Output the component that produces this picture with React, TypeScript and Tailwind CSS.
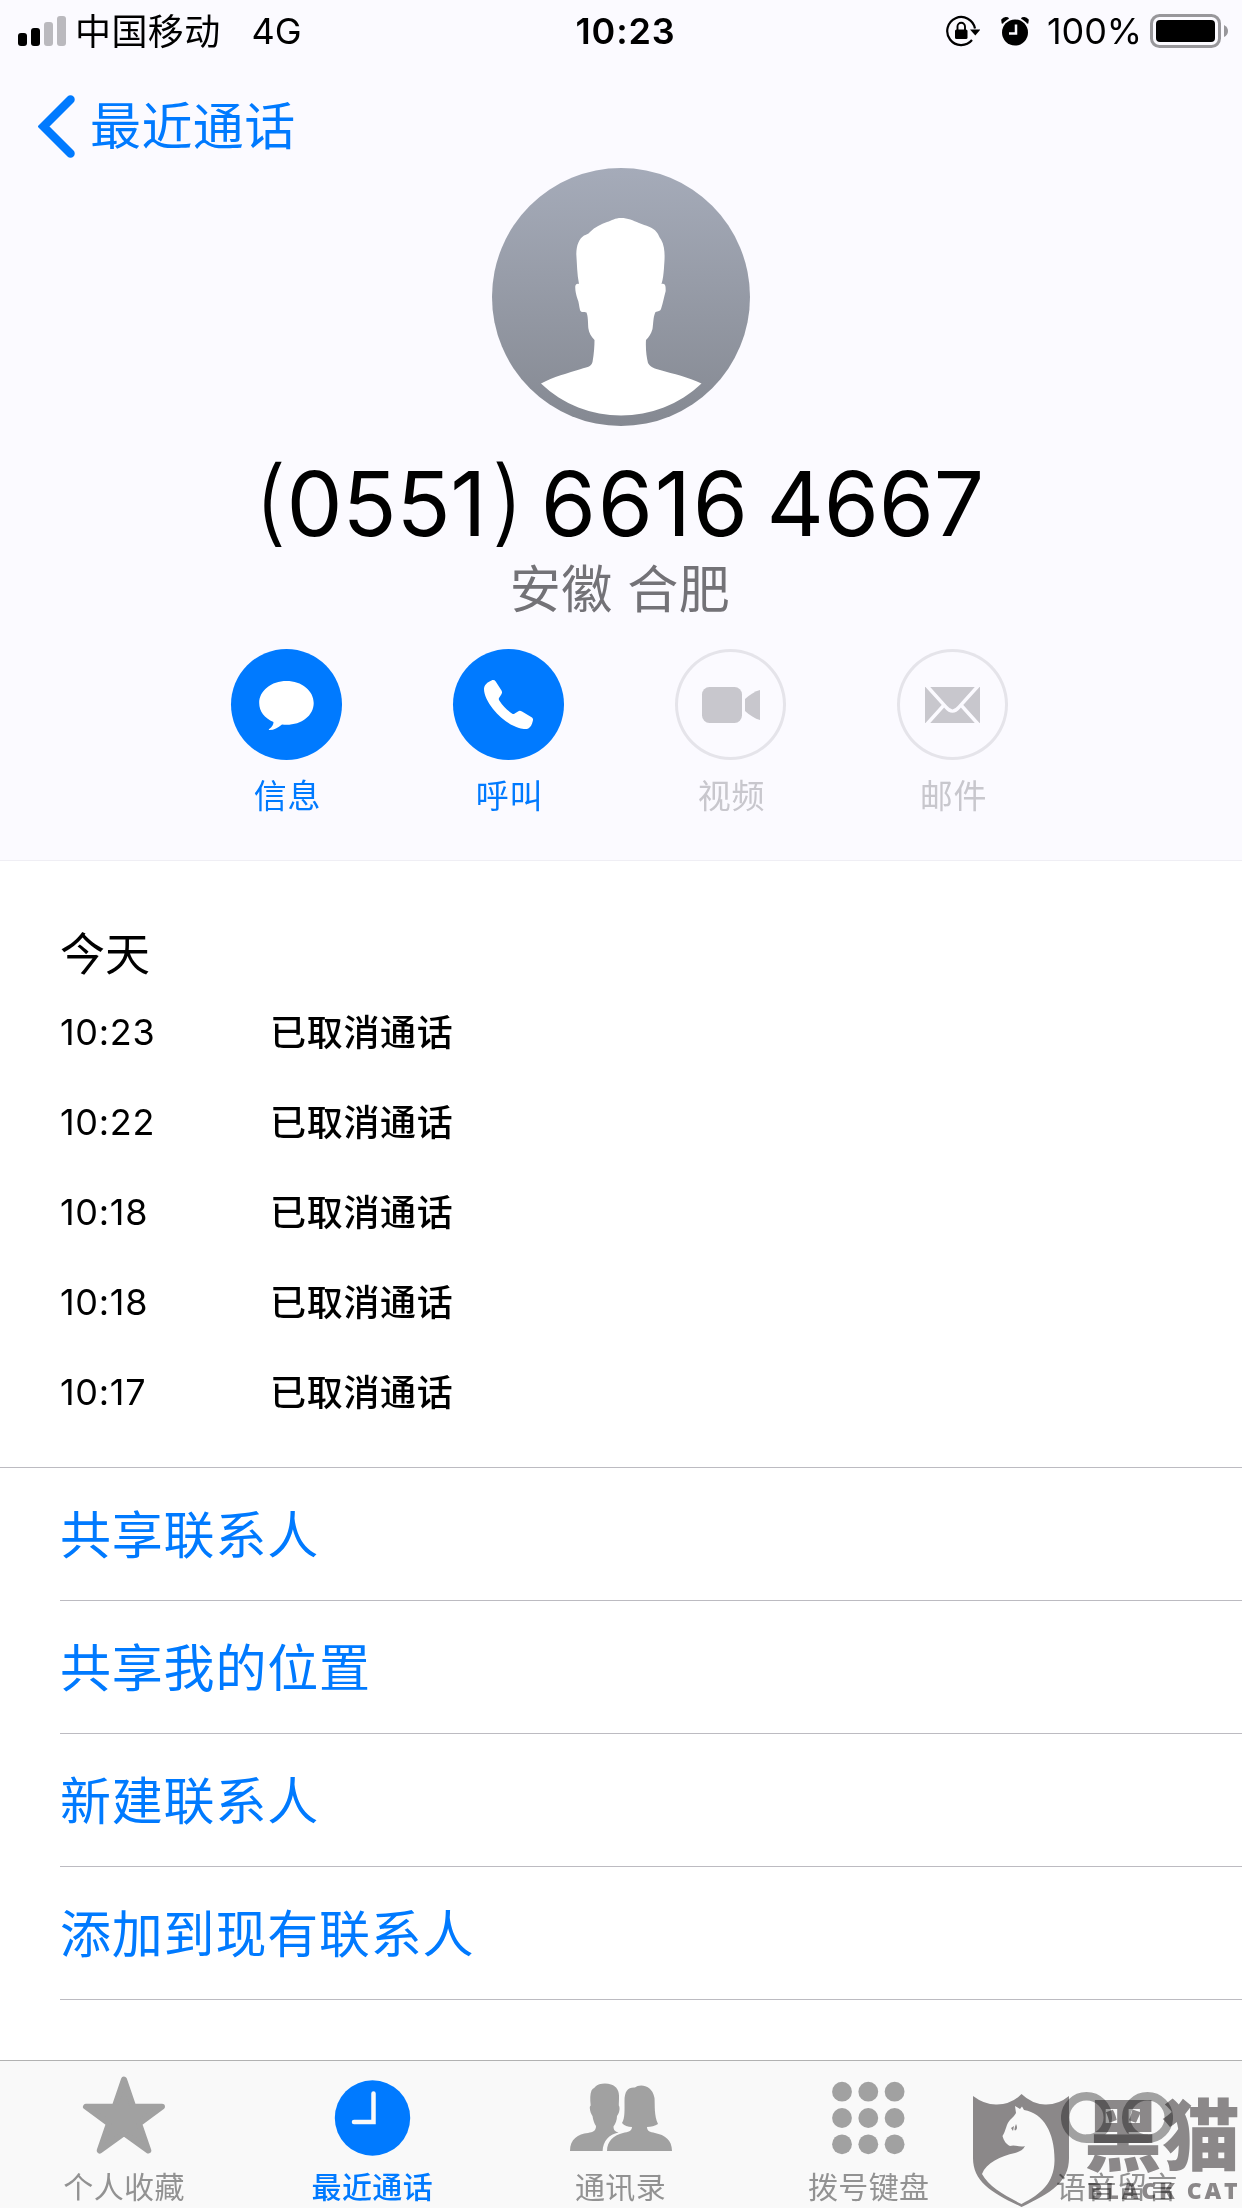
import type { ReactNode } from 'react';

interface Call {
  id: number;
  time: string;
  status: string;
}

interface Action {
  label: string;
  icon: ReactNode;
  enabled: boolean;
}

interface Tab {
  label: string;
  icon: ReactNode;
  active?: boolean;
}

const calls: Call[] = [
  { id: 1, time: '10:23', status: '已取消通话' },
  { id: 2, time: '10:22', status: '已取消通话' },
  { id: 3, time: '10:18', status: '已取消通话' },
  { id: 4, time: '10:18', status: '已取消通话' },
  { id: 5, time: '10:17', status: '已取消通话' },
];

const links = ['共享联系人', '共享我的位置', '新建联系人', '添加到现有联系人'];

const actions: Action[] = [
  {
    label: '信息',
    enabled: true,
    icon: (
      <svg viewBox="0 0 111 111" className="size-[111px]" fill="#fff">
        <path d="M55.500 32C70.700 32 82.700 41.700 82.700 54C82.700 66.500 70.700 75.800 55.500 75.800C54 75.800 52.500 75.700 51 75.500C47 79 43 81 38.500 81C37.700 81 37.600 80.300 38.200 79.900C41 78 42.500 76 42.500 73C33.500 69.200 28.200 62.500 28.200 54C28.200 41.700 40.300 32 55.500 32Z" />
      </svg>
    ),
  },
  {
    label: '呼叫',
    enabled: true,
    icon: (
      <svg viewBox="0 0 111 111" className="size-[111px]" fill="#fff">
        <path d="M38.500 31.400C40.200 30.600 41.600 30.900 42.700 32.400L48.500 41.500C49.300 42.900 49.200 44.100 48.300 45.400L46 49C45.600 50 45.800 50.600 46.300 51.400C50 57 54.500 61.500 59.300 64.800C60.100 65.300 60.900 65.200 61.700 64.600L65 62.400C66.300 61.600 67.600 61.700 69 62.500L78.600 68.300C80 69.300 80.300 70.400 79.800 72C79 75.600 77.500 78.300 75.300 79.600C73 80.500 70 80.200 66 79C57 76 47.500 69.500 40 60C34.500 53 31 45.500 31 40C31 36 34.500 33 38.500 31.400Z" />
      </svg>
    ),
  },
  {
    label: '视频',
    enabled: false,
    icon: (
      <svg viewBox="0 0 111 111" className="size-[111px]" fill="#c8c7cd">
        <rect x="27" y="38" width="40" height="36" rx="7.500" />
        <path d="M70 50C74.500 46 80 42.200 85 41V71C80 69.800 74.500 66 70 62Z" />
      </svg>
    ),
  },
  {
    label: '邮件',
    enabled: false,
    icon: (
      <svg viewBox="0 0 111 111" className="size-[111px]">
        <rect x="28" y="38" width="55" height="36" fill="#c8c7cd" />
        <g fill="none" stroke="#fbfaff" strokeWidth="3.400">
          <path d="M29.500 36.500L49 58.200Q55.500 66 62 58.200L81.500 36.500" />
          <path d="M29.500 75.500L47.500 55.500M81.500 75.500L63.500 55.500" />
        </g>
      </svg>
    ),
  },
];

const dots = [12, 38.3, 64.600];

const tabs: Tab[] = [
  {
    label: '个人收藏',
    icon: (
      <svg viewBox="0 0 90 90" className="size-[90px]" fill="#a1a1a1" stroke="#a1a1a1" strokeWidth="6" strokeLinejoin="round">
        <path d="M45 14L54.300 41.200H83L60 58L69.300 85L45 67.500L20.700 85L30 58L7 41.200H35.700Z" transform="translate(0 -2.500)" />
      </svg>
    ),
  },
  {
    label: '最近通话',
    active: true,
    icon: (
      <svg viewBox="0 0 90 90" className="size-[90px]">
        <circle cx="45.500" cy="50" r="37.700" fill="#007aff" />
        <path d="M46.500 25.500V54H27" fill="none" stroke="#f9f9f9" strokeWidth="4.500" strokeLinecap="round" />
      </svg>
    ),
  },
  {
    label: '通讯录',
    icon: (
      <svg viewBox="0 0 110 90" className="h-[90px] w-[110px]" fill="#a1a1a1">
        <path d="M4 83C4 71 12 66 22 65C27 64 30 63 30 58C28.500 56 27 52 26.500 48C25 46 24 43 23.800 40C23.800 38.500 24 38 24.700 37.500C24 31 24 26 25.500 22.500C27 20 28.500 20 29.500 18.500C32 15.500 40 14.500 45 16.500C51 18.500 53.500 23 53 30C53 33 52.800 36 52.800 37.500C54.500 40 53 46 51 48C51 52 49.500 56 47.500 58.500C47.500 62 49 63.500 52.500 64.500C43 66.500 37 73 36.600 83Z" />
        <path d="M41 83C41 73 48 67 57 65C62 64 66 63 66 59C62 59 58 57.500 56 55C59 50 58.500 42 58.500 33C58.500 23 62 19 69 19.500C73 16 86 16 88.500 30C89 37 88 48 92 56C89 58 85 59 81 59C81 63 84 64 89 65C99 67 106 72 106 83Z" />
      </svg>
    ),
  },
  {
    label: '拨号键盘',
    icon: (
      <svg viewBox="0 0 77 90" className="h-[90px] w-[77px]" fill="#a1a1a1">
        {dots.map((y) => dots.map((x) => <circle key={`${x}-${y}`} cx={x} cy={y + 11.700} r="9.900" />))}
      </svg>
    ),
  },
  {
    label: '语音留言',
    icon: (
      <svg viewBox="0 0 112 90" className="h-[90px] w-[112px]" fill="none" stroke="#a1a1a1" strokeWidth="8.500">
        <circle cx="25.500" cy="49.500" r="21.300" />
        <circle cx="86.500" cy="49.500" r="21.300" />
        <path d="M25 70.800H87" />
      </svg>
    ),
  },
];

function StatusBar() {
  return (
    <div className="grid h-[62px] grid-cols-3 items-center pl-[18px] pr-[14px] text-[36px] leading-none">
      <div className="flex items-center">
        <svg viewBox="0 0 48 30" className="h-[30px] w-12">
          <rect x="0" y="17" width="9" height="13" rx="3" />
          <rect x="13" y="12" width="9" height="18" rx="3" />
          <rect x="26" y="6" width="9" height="24" rx="3" fill="#bab9be" />
          <rect x="39" y="0" width="9" height="30" rx="3" fill="#bab9be" />
        </svg>
        <span className="ml-[9px] mt-[2px] tracking-[0.4px]">中国移动</span>
        <span className="ml-[31px]">4G</span>
      </div>
      <div className="pl-[5px] text-center font-semibold tracking-[0.8px]">10:23</div>
      <div className="flex items-center justify-end">
        <svg viewBox="0 0 34 32" className="h-8 w-[34px]">
          <path d="M26 25A14 14 0 1 1 29 13.500" fill="none" stroke="#000" strokeWidth="2.200" />
          <path d="M24 14.500H34.500L29.300 20.500Z" />
          <rect x="9" y="14.500" width="12.500" height="9.500" rx="1.500" />
          <path d="M11.500 15V11.500A3.700 3.700 0 0 1 19 11.500V15" fill="none" stroke="#000" strokeWidth="1.900" />
        </svg>
        <svg viewBox="0 0 28 30" className="ml-[21px] h-[30px] w-7">
          <circle cx="14" cy="16.500" r="13" />
          <path d="M1.500 7.500L1 4Q3 1 6.500 2L7.500 2.800M26.500 7.500L27 4Q25 1 21.500 2L20.500 2.800" stroke="#000" strokeWidth="1.600" />
          <path d="M15 8.500V17.500H8" fill="none" stroke="#fbfaff" strokeWidth="2.500" />
        </svg>
        <span className="ml-[18px] tracking-[-0.1px]">100%</span>
        <svg viewBox="0 0 78 34" className="ml-[8px] h-[34px] w-[78px]">
          <rect x="1.500" y="1.500" width="68" height="31" rx="8" fill="none" stroke="#98979b" strokeWidth="3" />
          <rect x="6" y="6" width="59" height="22" rx="4" />
          <path d="M74 11Q78 13 78 17T74 23Z" fill="#98979b" />
        </svg>
      </div>
    </div>
  );
}

function Avatar() {
  return (
    <svg viewBox="0 0 258 258" className="size-[258px]">
      <defs>
        <linearGradient id="avatar" x1="0" y1="0" x2="0" y2="1">
          <stop offset="0" stopColor="#a5abb9" />
          <stop offset="1" stopColor="#858992" />
        </linearGradient>
      </defs>
      <circle cx="129" cy="129" r="129" fill="url(#avatar)" />
      <path
        d="M129 50C136 50 141 52.500 147 55C154 58 161 59 164.500 64C167 67 167 69 169 71.500C174 80 172.500 92 172 100C171.500 106 171 111 169.500 116C173.500 115 173.700 118 173.700 123C172 129 171 135 169 141C168.500 143 166 143 163.500 144C161 149 161.500 155 160.500 161C159 166 157 169 154 172C153.500 181 154.500 189 156 195C159 200 163 200.500 168 202C182 206 196 209 209.500 215.500C165 258 93 258 49 215.500C61 209 76 205 89 201C95 199 99 199 100.500 194C102 186 102.500 178 102.500 172C99 168 97 165 96.300 160C96 154 96 148 94.500 144.500C92 144 89 145 88 142C87 138 87 134 85.500 131C84 126 83 122 83.300 118C84 116 85 115.500 87 116C85 106 85 96 84.300 86C84.500 77 87 71 92 67.500C94 66.500 96 66.500 98 64C103 59 109 56 115 54C120 52.500 123 50 129 50Z"
        fill="#fff"
      />
    </svg>
  );
}

function ActionButton({ label, icon, enabled }: Action) {
  return (
    <button className="flex w-[222px] flex-col items-center">
      <span className={`size-[111px] rounded-full ${enabled ? 'bg-[#007aff]' : 'shadow-[inset_0_0_0_3px_#e5e4ea]'}`}>
        {icon}
      </span>
      <span className={`mt-4 pl-[3px] text-[33px] leading-[40px] tracking-[0.8px] ${enabled ? 'text-[#007aff]' : 'text-[#c8c7cd]'}`}>
        {label}
      </span>
    </button>
  );
}

function Watermark() {
  return (
    <div className="absolute bottom-0 right-0 flex h-[116px] w-[270px] text-[#8e8b8c] mix-blend-multiply">
      <svg viewBox="0 0 98 116" className="h-[116px] w-[98px] shrink-0">
        <path
          d="M1 4Q13 13 25 12.500Q40 12 49.500 2Q60 12 73 12.500Q86 13 97 4V66C97 90 79 101 49.500 115C20 101 1 90 1 66Z"
          fill="currentColor"
        />
        <path
          d="M43 14L48 17L50 14.500L52 18C72 21 83 42 82.500 69C82 91 69 102 49.500 112C32 103 17 95 10 82C14 71 29 64 43 61C48 59.500 51 58 53 54C48 56 43 52 38 54C34 52 32 49 30.500 44C34 39 34 32 38 28C41 25 43 23 44 21Z"
          fill="#fff"
        />
        <path d="M39 36L42 34L41 39ZM44 32Q46 36 44 38Q41 40 44 32Z" fill="currentColor" />
      </svg>
      <div className="flex flex-col pl-[14px] pt-[2px]">
        <span className="h-[82px] whitespace-nowrap text-[78px] font-black leading-[85px]">黑猫</span>
        <span className="whitespace-nowrap pl-[3px] font-['Open_Sans'] text-[23px] font-extrabold leading-[28px] tracking-[2.9px]">BLACK CAT</span>
      </div>
    </div>
  );
}

export default function App() {
  return (
    <div className="relative flex h-[2208px] w-[1242px] flex-col overflow-hidden bg-white font-['Inter','Noto_Sans_CJK_SC',sans-serif] text-black">
      <header className="flex h-[861px] shrink-0 flex-col border-b border-[#efeef4] bg-[#fbfaff]">
        <StatusBar />

        <button className="flex h-[106px] items-start pl-[38px] pt-[33px] text-[#007aff]">
          <svg viewBox="0 0 38 64" className="h-16 w-[38px]" fill="none" stroke="currentColor" strokeWidth="8.500" strokeLinecap="round">
            <path d="M32.500 4.500L5.500 31.500L32.500 58.500" />
          </svg>
          <span className="ml-[14px] text-[51px] leading-[64px] tracking-[0.4px]">最近通话</span>
        </button>

        <div className="flex flex-col items-center">
          <Avatar />
          <h1 className="mt-[32px] h-[92px] pr-[4px] text-[89px] leading-[92px] tracking-[-0.2px] [word-spacing:-8px]">
            <span className="align-[2px] text-[94px] font-light leading-[80px]">(</span>
            0551
            <span className="ml-[5px] align-[2px] text-[94px] font-light leading-[80px]">)</span>{' '}
            <span className="tracking-[1.8px]">6616</span> 4667
          </h1>
          <p className="mt-[9px] pr-[2px] text-[51px] leading-[62px] tracking-[0.4px] text-[#737277]">安徽 合肥</p>
        </div>

        <div className="mt-[28px] flex pl-[175px]">
          {actions.map((action) => (
            <ActionButton key={action.label} {...action} />
          ))}
        </div>
      </header>

      <section className="h-[607px] shrink-0 border-b border-[#bcbbc1] pl-[60px] pt-[64px]">
        <h2 className="text-[45px] leading-[60px]">今天</h2>
        <ul className="mt-[3px]">
          {calls.map((call) => (
            <li key={call.id} className="flex h-[90px] items-center text-[36px]">
              <span className="w-[210px] pb-[2px] tracking-[0.7px]">{call.time}</span>
              <span className="font-medium tracking-[0.7px]">{call.status}</span>
            </li>
          ))}
        </ul>
      </section>

      <section className="grow pl-[60px]">
        {links.map((link) => (
          <button key={link} className="flex h-[133px] w-full items-center border-b border-[#bcbbc1] pt-[4px] text-[51px] tracking-[0.8px] text-[#007aff]">
            {link}
          </button>
        ))}
      </section>

      <nav className="relative flex h-[148px] shrink-0 border-t border-[#b2b2b2] bg-[#f9f9f9] pr-px">
        {tabs.map((tab) => (
          <button key={tab.label} className="flex flex-1 flex-col items-center pt-[7px]">
            {tab.icon}
            <span className={`mt-[10px] text-[30px] leading-[38px] tracking-[0.4px] ${tab.active ? 'font-medium text-[#007aff]' : 'text-[#929292]'}`}>
              {tab.label}
            </span>
          </button>
        ))}
        <Watermark />
      </nav>
    </div>
  );
}
